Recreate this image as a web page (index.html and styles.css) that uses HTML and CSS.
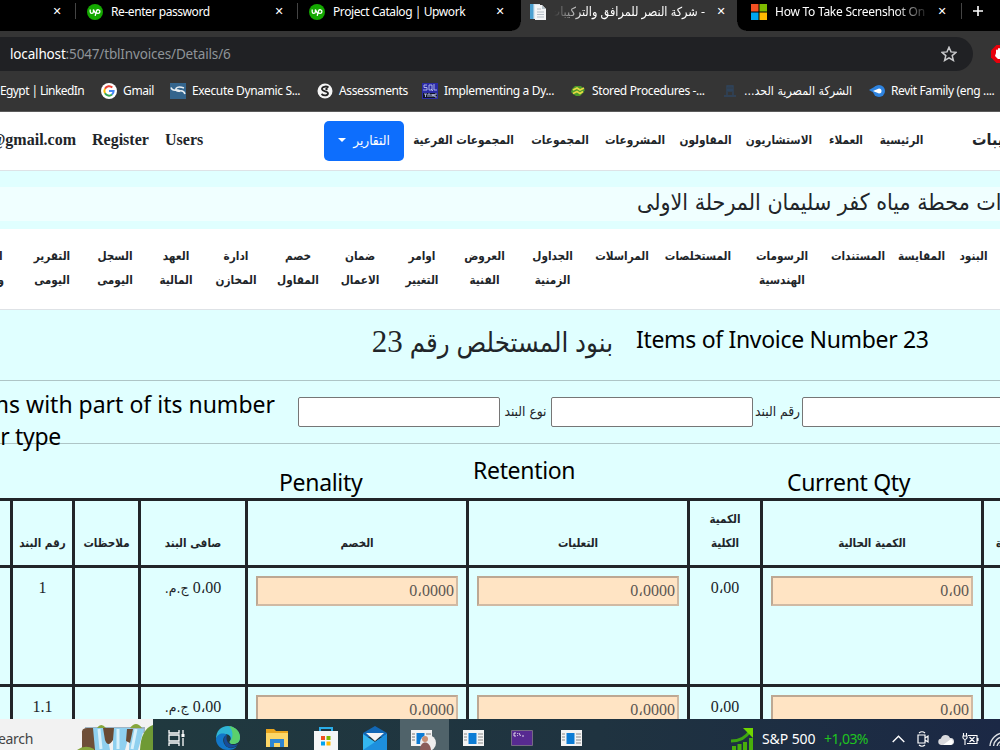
FILE: index.html
```html
<!DOCTYPE html>
<html lang="ar">
<head>
    <meta charset="UTF-8">
    <meta name="viewport" content="width=device-width, initial-scale=1.0">
    <title>شركة النصر للمرافق والتركيبات</title>
    <link rel="stylesheet" href="styles.css">
</head>

<body>
    <!-- browser tabs -->
    <div class="tabs">
        <div class="tab tab-first"><span class="close">✕</span></div>
        <div class="tab">
            <svg class="fav" viewBox="0 0 16 16"><circle cx="8" cy="8" r="8" fill="#14a800"/><path d="M3.2 5.5v2.3a1.6 1.6 0 0 0 3.2 0V5.5c.8 2 1.8 3.6 2.6 4M8.2 11.8l1.3-5a1.8 1.8 0 1 1 1.6 2.6c-1 0-1.8-.6-2.6-1.6" fill="none" stroke="#fff" stroke-width="1.3"/></svg>
            <span class="tab-text">Re-enter password</span><span class="close">✕</span>
        </div>
        <div class="tab tab-last">
            <svg class="fav" viewBox="0 0 16 16"><circle cx="8" cy="8" r="8" fill="#14a800"/><path d="M3.2 5.5v2.3a1.6 1.6 0 0 0 3.2 0V5.5c.8 2 1.8 3.6 2.6 4M8.2 11.8l1.3-5a1.8 1.8 0 1 1 1.6 2.6c-1 0-1.8-.6-2.6-1.6" fill="none" stroke="#fff" stroke-width="1.3"/></svg>
            <span class="tab-text">Project Catalog | Upwork</span><span class="close">✕</span>
        </div>
        <div class="tab tab-active">
            <svg class="fav" viewBox="0 0 16 16"><path d="M0 0h10v15H0z" fill="#d8e6ee"/><path d="M0 0h3.500v15H0z" fill="#4aa0d0"/><path d="M5 1h7l4 4v11H5z" fill="#f3f5f6"/><path d="M12 1v4h4" fill="#b7c3ca"/><path d="M7 5h4M7 8h7M7 10.500h7M7 13h7" stroke="#b4bec6"/></svg>
            <span class="tab-text tab-ar" dir="rtl">- شركة النصر للمرافق والتركيبات</span><span class="close">✕</span>
        </div>
        <div class="tab tab-next">
            <svg class="fav" viewBox="0 0 16 16"><path d="M0 0h7.500v7.500H0z" fill="#f25022"/><path d="M8.500 0H16v7.500H8.500z" fill="#7fba00"/><path d="M0 8.500h7.500V16H0z" fill="#00a4ef"/><path d="M8.500 8.500H16V16H8.500z" fill="#ffb900"/></svg>
            <span class="tab-text fade">How To Take Screenshot On</span><span class="close">✕</span>
        </div>
        <svg class="plus" viewBox="0 0 12 12"><path d="M6 1v10M1 6h10" stroke="#fff" stroke-width="1.600"/></svg>
    </div>

    <!-- address bar -->
    <div class="toolbar">
        <div class="address">
            <span class="url"><b>localhost</b>:5047/tblInvoices/Details/6</span>
            <svg class="star" viewBox="0 0 16 16"><path d="M8 1.300l2 4.600 5 .4-3.800 3.300 1.200 4.900L8 11.900l-4.400 2.600 1.200-4.900L1 6.300l5-.4z" fill="none" stroke="#c9cacc" stroke-width="1.500"/></svg>
        </div>
        <svg class="ext" viewBox="0 0 18 18"><path d="M5.500 0h7L18 5.500v7L12.500 18h-7L0 12.500v-7z" fill="#e8000b"/><path d="M5 8V5.500a1 1 0 0 1 2 0V4a1 1 0 0 1 2 0v10H7l-3-3z" fill="#fff"/></svg>
    </div>

    <!-- bookmarks -->
    <div class="bookmarks">
        <span class="bm bm-egypt">Egypt | LinkedIn</span>
        <span class="bm bm-gmail"><svg viewBox="0 0 16 16"><circle cx="8" cy="8" r="8" fill="#fff"/><g fill="none" stroke-width="2"><path d="M11.300 4.500A4.600 4.600 0 0 0 4 5.700" stroke="#ea4335"/><path d="M4 5.700a4.600 4.600 0 0 0 0 4.600" stroke="#fbbc05"/><path d="M4 10.300a4.600 4.600 0 0 0 7 1.200" stroke="#34a853"/><path d="M11 11.500A4.600 4.600 0 0 0 12.600 8H8" stroke="#4285f4"/></g></svg>Gmail</span>
        <span class="bm bm-exec"><svg viewBox="0 0 16 16"><path d="M0 0h16v16H0z" fill="#34658d"/><path d="M1 4.500c1 3 3.500 3 6 2.500 2-.3 3 .5 2.500 2M15 11c-1-3-3-3.500-5.500-3S5 7.500 6 5.500c1.500-2 5-1.500 8-.5" fill="none" stroke="#e8eef2" stroke-width="1.500"/></svg>Execute Dynamic S...</span>
        <span class="bm bm-assess"><svg viewBox="0 0 16 16"><circle cx="8" cy="8" r="7.500" fill="#f4f4f4"/><path d="M11.500 4.500C9 2.500 4.500 4 5 6.300S11 8 11 10.300s-4 3-6.500.7" fill="none" stroke="#222" stroke-width="1.800"/><circle cx="9.500" cy="6" r="1.200" fill="#222"/></svg>Assessments</span>
        <span class="bm bm-impl"><svg viewBox="0 0 16 16"><path d="M0 0h16v16H0z" fill="#2b2ba5"/><path d="M1 10h14v5H1z" fill="#101426"/><path d="M5 2H2v2.500h3V7H1M7 2h3v5H7zM9 6l2 2M12 1v6h3M2 11h3M3.500 11v3M6 14v-3h2v3M10 14v-3l1 2 1-2v3M15 11h-2v3h2" fill="none" stroke="#b9c1ee" stroke-width=".9"/></svg>Implementing a Dy...</span>
        <span class="bm bm-stored"><svg viewBox="0 0 16 16"><path d="M2 6l3-3h6l2 2 2 2-2 3-3 3H6l-3-2-2-2z" fill="#4c9a2a"/><path d="M3 7l4-2 3 2 4-2M3 10.500l4-2 3 2 3-2" fill="none" stroke="#e6d843" stroke-width="1.700"/></svg>Stored Procedures -...</span>
        <span class="bm bm-company"><svg viewBox="0 0 16 16"><path d="M2 13h12M5 12V3h6v9M7 4v5M9 4v5M5 7h6" fill="none" stroke="#2f4660" stroke-width="1.300"/></svg><span class="bm-ar" dir="rtl">الشركة المصرية الحد...</span></span>
        <span class="bm bm-revit"><svg viewBox="0 0 16 16"><circle cx="10" cy="8" r="6" fill="#2e83df"/><path d="M0 7l7-4v8z" fill="#2e83df"/><path d="M4 8l6-2.500a2.500 2.500 0 1 1 0 5z" fill="#fff"/></svg>Revit Family (eng ....</span>
    </div>

    <!-- site nav -->
    <div class="navbar">
        <span class="account"><span>@gmail.com</span></span>
        <span class="link reg">Register</span>
        <span class="link users">Users</span>
        <button class="btn-report"><i class="caret"></i><span>التقارير</span></button>
        <span class="nav-ar w-sub">المجموعات الفرعية</span>
        <span class="nav-ar w-groups">المجموعات</span>
        <span class="nav-ar w-proj">المشروعات</span>
        <span class="nav-ar w-contr">المقاولون</span>
        <span class="nav-ar w-consult">الاستشاريون</span>
        <span class="nav-ar w-client">العملاء</span>
        <span class="nav-ar w-home">الرئيسية</span>
        <span class="brand" dir="rtl">يبات</span>
    </div>

    <!-- project title -->
    <div class="project"><h2 dir="rtl">ات محطة مياه كفر سليمان المرحلة الاولى</h2></div>

    <!-- project menu -->
    <div class="submenu">
        <span class="s-cut"><span dir="rtl">ا<br>و</span></span>
        <span class="s62">التقرير<br>اليومى</span>
        <span class="s64">السجل<br>اليومى</span>
        <span class="s58">العهد<br>المالية</span>
        <span class="s62">ادارة<br>المخازن</span>
        <span class="s62">خصم<br>المقاول</span>
        <span class="s62">ضمان<br>الاعمال</span>
        <span class="s62">اوامر<br>التغيير</span>
        <span class="s63">العروض<br>الفنية</span>
        <span class="s73">الجداول<br>الزمنية</span>
        <span class="s66">المراسلات</span>
        <span class="s86">المستخلصات</span>
        <span class="s82">الرسومات<br>الهندسية</span>
        <span class="s70">المستندات</span>
        <span class="s57">المقايسة</span>
        <span class="s47">البنود</span>
    </div>

    <!-- invoice items -->
    <div class="content">
        <h1 dir="rtl">بنود المستخلص رقم <span class="num">23</span></h1>
        <div class="search">
            <input type="text"><label>نوع البند</label>
            <input type="text"><label class="lbl-no">رقم البند</label>
            <input type="text">
        </div>
        <table class="items">
            <colgroup><col class="c-edge"><col class="c-no"><col class="c-note"><col class="c-net"><col class="c-in"><col class="c-in"><col class="c-total"><col class="c-in"><col class="c-edge"></colgroup>
            <tr class="head">
                <th></th>
                <th>رقم البند</th>
                <th>ملاحظات</th>
                <th>صافى البند</th>
                <th>الخصم</th>
                <th>التعليات</th>
                <th>الكمية<br>الكلية</th>
                <th>الكمية الحالية</th>
                <th class="cut">ة</th>
            </tr>
            <tr>
                <td></td>
                <td>1</td>
                <td></td>
                <td dir="rtl">0،00 <small>ج.م.</small></td>
                <td><input type="text" value="0،0000" disabled></td>
                <td><input type="text" value="0،0000" disabled></td>
                <td>0،00</td>
                <td><input type="text" value="0،00" disabled></td>
                <td></td>
            </tr>
            <tr>
                <td></td>
                <td>1.1</td>
                <td></td>
                <td dir="rtl">0،00 <small>ج.م.</small></td>
                <td><input type="text" value="0،0000" disabled></td>
                <td><input type="text" value="0،0000" disabled></td>
                <td>0،00</td>
                <td><input type="text" value="0،00" disabled></td>
                <td></td>
            </tr>
        </table>

        <!-- english notes over the page -->
        <div class="note n-title">Items of Invoice Number 23</div>
        <div class="note n-search"><span>ms with part of its number</span></div>
        <div class="note n-type"><span>r type</span></div>
        <div class="note n-pen">Penality</div>
        <div class="note n-ret">Retention</div>
        <div class="note n-qty">Current Qty</div>
    </div>

    <!-- windows taskbar -->
    <div class="taskbar">
        <div class="searchbox">
            <span>earch</span>
            <svg width="76" height="31" viewBox="0 0 76 31"><path d="M8 8h60v6H8z" fill="#9fb4c4"/><path d="M5 31V15q-1-6 5-6h8l3 22z" fill="#6e4f38"/><path d="M16 9h13l4 22H18zM36 9h18l-6 22H36zM53 10h14l-6 21h-9z" fill="#8fd0ef"/><path d="M22 10l2 20M41 10v20M59 10l-4 20" stroke="#d8f1fb" stroke-width="3"/><path d="M76 6q-12 4-13 25h13z" fill="#6f9a35"/><path d="M0 31q8-6 17-1v1zM20 9q4-6 9 0zM53 9q6-8 12 0z" fill="#86a63c"/><path d="M26 9h11l-1 12q-5 8-8 0zM50 10h6l-3 14-4-2z" fill="#694a33"/></svg>
        </div>
        <div class="slot slot-first"><svg width="18" height="16" viewBox="0 0 18 16"><path d="M1 0v3h10V0M1 16v-3h10v3M1 5h10v6H1zM15 0v4M15 8v8" fill="none" stroke="#fff" stroke-width="1.300"/><path d="M13.500 4h3v3h-3z" fill="#fff"/></svg></div>
        <div class="slot"><svg width="24" height="24" viewBox="0 0 24 24"><path d="M12 0a12 12 0 0 1 12 11c0 5-3 7-7 7-3 0-4-2-3-3 2-3 0-7-5-7-4 0-8 2-9 5C0 5 5 0 12 0z" fill="#2fb5d5"/><path d="M13 0c7 1 11 6 11 11 0 5-3 7-7 7-3 0-4-2-3-3 3-2 4-10-1-15z" fill="#5bd06c"/><path d="M0 13c1-5 7-7 11-4-4 1-5 6-2 10 3 4 8 4 12 1-2 3-5 4-9 4C5 24 0 19 0 13z" fill="#1277c9"/><path d="M8 14c0-3 1-4 3-5-2 6 2 10 7 10 2 0 3-1 4-1-4 6-14 5-14-4z" fill="#174d9a"/></svg></div>
        <div class="slot"><svg width="22" height="20" viewBox="0 0 22 20"><path d="M0 1h8l2 2h12v15H0z" fill="#e9a51e"/><path d="M0 5h22v14H0z" fill="#fcd667"/><path d="M4 19v-8h14v8h-4v-4H8v4z" fill="#2f86d2"/></svg></div>
        <div class="slot"><svg width="24" height="24" viewBox="0 0 24 24"><path d="M6 7V2h12v5" fill="none" stroke="#2aaeea" stroke-width="2"/><path d="M0 5h24v19H0z" fill="#f5f6f7"/><path d="M7 10h4v4H7z" fill="#f05022"/><path d="M12.500 10h4v4h-4z" fill="#7fba00"/><path d="M7 15.500h4v4H7z" fill="#00a4ef"/><path d="M12.500 15.500h4v4h-4z" fill="#ffb900"/></svg></div>
        <div class="slot"><svg width="24" height="24" viewBox="0 0 24 24"><path d="M0 7l12-7 12 7v4H0z" fill="#1267b5"/><path d="M3 7h18l-9 8z" fill="#f4f4f4"/><path d="M0 8l12 8 12-8v16H0z" fill="#34b7f1"/><path d="M0 24L24 8v16z" fill="#1d8fdd"/></svg></div>
        <div class="slot slot-on"><svg width="26" height="24" viewBox="0 0 26 24"><path d="M0 4h21v16H0z" fill="#f3f3f3"/><path d="M5.500 7h8v11h-8z" fill="#0c7cd5"/><path d="M1 8h3M1 11h3M1 14h3M15 8h5M15 11h5" stroke="#777"/><circle cx="17" cy="17" r="8" fill="#eee"/><circle cx="14" cy="13" r="3" fill="#c98f73"/><path d="M9 24c0-10 10-10 11 0z" fill="#8b5d59"/></svg></div>
        <div class="slot"><svg width="21" height="16" viewBox="0 0 21 16"><path d="M0 0h21v16H0z" fill="#f3f3f3"/><path d="M5.500 3h8v11h-8z" fill="#0c7cd5"/><path d="M1 4h3M1 7h3M1 10h3M15 4h5M15 7h5M15 10h5M15 13h5" stroke="#888"/></svg></div>
        <div class="slot"><svg width="22" height="16" viewBox="0 0 22 16"><path d="M.5.500h21v15H.5z" fill="#572a91" stroke="#756a83"/><path d="M5 3H3v3h2M6.500 3v.8M6.500 5.200V6M8 3l1.500 3M11 6h2" fill="none" stroke="#fff" stroke-width=".8"/></svg></div>
        <div class="slot"><svg width="21" height="16" viewBox="0 0 21 16"><path d="M0 0h21v16H0z" fill="#f3f3f3"/><path d="M5.500 3h8v11h-8z" fill="#0c7cd5"/><path d="M1 4h3M1 7h3M1 10h3M15 4h5M15 7h5M15 10h5M15 13h5" stroke="#888"/></svg></div>
        <div class="stock">
            <svg width="23" height="24" viewBox="0 0 23 24"><path d="M0 14q13 0 19-10" fill="none" stroke="#3da511" stroke-width="3"/><path d="M12 1h10v10z" fill="#70d600"/><path d="M1 19h4v5H1zM6.500 17h4v7h-4zM12 15h4v9h-4zM18 11h4v13h-4z" fill="#48ae0b"/></svg>
            <span class="sp">S&amp;P 500</span><span class="up">+1,03%</span>
        </div>
        <div class="tray">
            <svg class="i-caret" width="13" height="8" viewBox="0 0 13 8"><path d="M.7 7l5.800-5.800L12.300 7" fill="none" stroke="#fff" stroke-width="1.400"/></svg>
            <svg class="i-meet" width="13" height="16" viewBox="0 0 13 16"><path d="M1 4h7v8H1zM8 7l3-2v6L8 9M2 2q3-2.500 6 0M2 14q3 2.500 6 0" fill="none" stroke="#fff" stroke-width="1.200"/></svg>
            <svg class="i-cloud" width="16" height="11" viewBox="0 0 16 11"><path d="M3 11a3.300 3.300 0 0 1 0-6.500A4.700 4.700 0 0 1 12 4a3.500 3.500 0 0 1 1 7z" fill="#d9dade"/><path d="M5 11l8-6a3.300 3.300 0 0 1 0 6z" fill="#fff"/></svg>
            <svg class="i-batt" width="17" height="12" viewBox="0 0 17 12"><path d="M6 2.500h9v8H5M16 5v3M7.500 4l5 5M12.500 4l-5 5M1.500 0v3M4.500 0v3M1 3h4v2q-2 3-4 0zM3 6v6" fill="none" stroke="#fff" stroke-width="1.100"/></svg>
            <svg class="i-wifi" width="16" height="14" viewBox="0 0 16 14"><path d="M1 14A14 14 0 0 1 15 1M4.500 14A10 10 0 0 1 15 5M8 14a7 7 0 0 1 7-5M11 14q1-2 4-2" fill="none" stroke="#dcdfe3" stroke-width="1.400"/></svg>
        </div>
    </div>
</body>
</html>
```

FILE: styles.css
```css
* {
    box-sizing: border-box;
}

html {
    overflow: hidden;
}

body {
    margin: 0;
    width: 1000px;
    height: 750px;
    overflow: hidden;
    background-color: #e0ffff;
    color: #212529;
    font-family: "Liberation Serif", "DejaVu Sans Condensed", serif;
    font-size: 16px;
    line-height: 24px;
    white-space: nowrap;
}

svg {
    display: block;
    flex: none;
}

/* browser */
.tabs {
    display: flex;
    height: 31px;
    background-color: #000;
    color: #fff;
    font: 12px/16px "Noto Sans", "DejaVu Sans Condensed", sans-serif;
    overflow: hidden;
}

.tab {
    display: flex;
    align-items: center;
    width: 222px;
    height: 24px;
    padding: 0 14px 0 11px;
    position: relative;
    flex: none;
}

.tab::after {
    content: "";
    position: absolute;
    right: 0;
    top: 3px;
    width: 1px;
    height: 16px;
    background-color: #444;
}

.tab-first {
    width: 76px;
}

.tab-last {
    width: 223px;
    padding-right: 16px;
}

.tab-last::after {
    display: none;
}

.tab-active {
    width: 216px;
    height: 31px;
    padding: 0 11px 7px 9px;
    background-color: #353535;
}

/* rounded feet of the active tab */
.tab-active::before,
.tab-active::after {
    content: "";
    position: absolute;
    top: auto;
    bottom: 0;
    width: 9px;
    height: 9px;
    background: radial-gradient(circle at 0 0, #000 8px, #353535 9px);
    left: -9px;
}

.tab-active::after {
    left: auto;
    right: -9px;
    background: radial-gradient(circle at 100% 0, #000 8px, #353535 9px);
}

.tab-next {
    width: 225px;
    padding: 0 15px 0 14px;
}

.fav {
    width: 16px;
    height: 16px;
    margin-right: 8px;
}

.tab-text {
    letter-spacing: -0.42px;
}

.tab-ar {
    width: 151px;
    overflow: hidden;
    font-size: 12.5px;
    letter-spacing: 0;
    -webkit-mask-image: linear-gradient(90deg, transparent, #000 30px);
}

.fade {
    letter-spacing: -0.25px;
    -webkit-mask-image: linear-gradient(90deg, #000 120px, transparent 155px);
}

.close {
    width: 10px;
    margin-left: auto;
    font: 11px/16px "DejaVu Sans", sans-serif;
    text-align: center;
}

.plus {
    width: 12px;
    height: 12px;
    margin: 5px 0 0 10px;
}

.toolbar {
    display: flex;
    height: 41px;
    padding-top: 6px;
    background-color: #353535;
}

.address {
    display: flex;
    align-items: center;
    width: 973px;
    height: 34px;
    flex: none;
    padding: 0 16px 0 10px;
    background-color: #202124;
    border-radius: 0 17px 17px 0;
}

.url {
    color: #8f9499;
    font: 13.5px/20px "Noto Sans", sans-serif;
    letter-spacing: -0.16px;
}

.url b {
    color: #fff;
    font-weight: normal;
}

.star {
    width: 16px;
    height: 16px;
    margin-left: auto;
}

.ext {
    width: 18px;
    height: 18px;
    margin: 8px 0 0 18px;
}

.bookmarks {
    display: flex;
    align-items: center;
    height: 40px;
    padding-bottom: 1px;
    border-bottom: 1px solid #5b5b5b;
    background-color: #353535;
    color: #fff;
    font: 12px/16px "Noto Sans", sans-serif;
    letter-spacing: -0.36px;
}

.bm {
    display: flex;
    align-items: center;
    flex: none;
}

.bm svg {
    width: 16px;
    height: 16px;
    margin-right: 6px;
}

.bm-egypt {
    width: 101px;
    letter-spacing: -0.6px;
}

.bm-gmail { width: 69px; }
.bm-exec { width: 147px; }
.bm-assess { width: 105px; }
.bm-impl { width: 148px; }
.bm-stored { width: 152px; }
.bm-company { width: 147px; }

.bm-ar {
    font-family: "DejaVu Sans Condensed", sans-serif;
    font-size: 12.3px;
    letter-spacing: 0;
}

/* site nav */
.navbar {
    display: flex;
    align-items: center;
    height: 59px;
    padding-bottom: 2px;
    border-bottom: 1px solid #dee2e6;
    background-color: #fff;
    font-weight: bold;
    overflow: hidden;
}

.account {
    display: flex;
    justify-content: flex-end;
    width: 76px;
    flex: none;
}

.link {
    flex: none;
    padding-left: 16px;
}

.reg {
    width: 73px;
}

.users {
    width: 175px;
}

.btn-report {
    display: flex;
    align-items: center;
    justify-content: center;
    gap: 7px;
    width: 80px;
    height: 40px;
    flex: none;
    padding: 0 0 2px;
    margin: 2px 0 0;
    border: 0;
    border-radius: 5px;
    background-color: #0d6efd;
    color: #fff;
    font: 13.5px/24px "DejaVu Sans Condensed", sans-serif;
}

.caret {
    border: 4px solid transparent;
    border-top-color: #fff;
    border-bottom: 0;
}

.nav-ar {
    flex: none;
    text-align: center;
    font: bold 11.7px/24px "DejaVu Sans Condensed", sans-serif;
}

.w-sub { width: 119px; }
.w-groups { width: 74px; }
.w-proj { width: 76px; }
.w-contr { width: 65px; }
.w-consult { width: 82px; }
.w-client { width: 52px; }
.w-home { width: 59px; }

.brand {
    margin-left: 41px;
    flex: none;
    font: bold 16px/24px "DejaVu Sans Condensed", sans-serif;
}

/* project */
.project {
    height: 58px;
    padding-top: 16px;
}

.project h2 {
    display: flex;
    justify-content: flex-end;
    margin: 0;
    height: 34px;
    padding-left: 637px;
    background-color: #f0ffff;
    font: 23px/31px "DejaVu Sans Condensed", sans-serif;
}

.submenu {
    display: flex;
    height: 81px;
    padding-top: 15px;
    border-bottom: 1px solid #dee2e6;
    background-color: #fff;
    font: bold 11.7px/24px "DejaVu Sans Condensed", sans-serif;
    text-align: center;
}

.submenu > span {
    flex: none;
}

.submenu .s-cut {
    display: flex;
    justify-content: flex-end;
    width: 4px;
    margin-right: 17px;
}

.s47 { width: 47px; }
.s57 { width: 57px; }
.s58 { width: 58px; }
.s62 { width: 62px; }
.s63 { width: 63px; }
.s64 { width: 64px; }
.s66 { width: 66px; }
.s70 { width: 70px; }
.s73 { width: 73px; }
.s82 { width: 82px; }
.s86 { width: 86px; }

/* invoice */
.content {
    position: relative;
    height: 409px;
    overflow: hidden;
}

.content h1 {
    margin: 0;
    height: 70px;
    width: 613px;
    font: 27.3px/66px "Liberation Serif", "DejaVu Sans Condensed", serif;
}

.num {
    font-size: 31px;
    line-height: 60px;
}

.search {
    display: flex;
    align-items: center;
    height: 64px;
    border-top: 1px solid #aec5c6;
    border-bottom: 1px solid #aec5c6;
    padding-left: 298px;
}

.search input {
    width: 202px;
    height: 30px;
    flex: none;
    margin: 0;
    border: 1px solid #767676;
    border-radius: 2px;
    background-color: #fff;
}

.search label {
    width: 51px;
    flex: none;
    padding-bottom: 3px;
    text-align: center;
    font: 13.7px/24px "DejaVu Sans Condensed", sans-serif;
}

.search .lbl-no {
    width: 49px;
}

.items {
    width: 1112px;
    margin: 54px 0 0 -60px;
    border-collapse: collapse;
    table-layout: fixed;
}

.c-edge { width: 70px; }
.c-no { width: 62px; }
.c-note { width: 66px; }
.c-net { width: 107px; }
.c-in { width: 221px; }
.c-total { width: 73px; }

.items th,
.items td {
    height: 119px;
    padding: 8px 0;
    border: 3px solid #212529;
    text-align: center;
    vertical-align: top;
}

.items th {
    height: 67px;
    padding: 6px 0 10px;
    vertical-align: bottom;
    font: bold 11.5px/24px "DejaVu Sans Condensed", sans-serif;
}

.items .cut {
    text-align: left;
    padding-left: 12px;
}

.items small {
    font: 14px/20px "DejaVu Sans Condensed", sans-serif;
}

.items input {
    display: block;
    width: 202px;
    height: 30px;
    margin: 0 auto;
    padding: 0 2px 1px;
    border: 2px solid #bda893;
    border-right-color: #d0baa4;
    border-bottom-color: #d0baa4;
    background-color: #ffe4c4;
    color: #5c5752;
    text-align: right;
    font: 16px "Liberation Serif", "DejaVu Sans Condensed", serif;
}

/* notes */
.note {
    position: absolute;
    color: #000;
    font: 23px/32px "Noto Sans", sans-serif;
    letter-spacing: -0.32px;
}

.n-title { left: 636px; top: 13px; }
.n-search { left: 0; top: 78px; width: 275px; }
.n-type { left: 0; top: 110px; width: 61px; }
.n-pen { left: 279px; top: 156px; }
.n-ret { left: 473px; top: 144px; }
.n-qty { left: 787px; top: 156px; }

.n-search,
.n-type {
    display: flex;
    justify-content: flex-end;
}

.n-search {
    letter-spacing: 0;
}

/* taskbar */
.taskbar {
    display: flex;
    align-items: center;
    height: 40px;
    background: linear-gradient(90deg, #20393f 15%, #1f3340 60%, #1b2845);
    color: #fff;
    font: 14px/20px "Noto Sans", sans-serif;
}

.searchbox {
    display: flex;
    align-items: center;
    width: 153px;
    height: 40px;
    flex: none;
    background-color: #f2f2f2;
    color: #444;
}

.searchbox span {
    display: flex;
    justify-content: flex-end;
    width: 33px;
    margin-right: 44px;
    letter-spacing: -0.3px;
}

.searchbox svg {
    align-self: flex-start;
}

.slot {
    display: flex;
    align-items: center;
    justify-content: center;
    width: 49px;
    height: 40px;
    padding-right: 1px;
    flex: none;
}

.slot svg {
    position: relative;
    top: -1px;
}

.slot-first {
    width: 51px;
    padding-right: 3px;
}

.slot-on {
    background-color: #50636a;
}

.stock {
    display: flex;
    align-items: center;
    width: 161px;
    margin-left: 135px;
    flex: none;
}

.sp {
    width: 62px;
    margin-left: 8px;
    letter-spacing: -0.1px;
}

.up {
    color: #1fc41f;
    letter-spacing: -0.6px;
}

.tray {
    display: flex;
    align-items: center;
    flex: none;
}

.i-meet { margin-left: 12px; }
.i-cloud { margin-left: 8px; }
.i-batt { margin-left: 8px; }
.i-wifi { margin-left: 10px; }
```
